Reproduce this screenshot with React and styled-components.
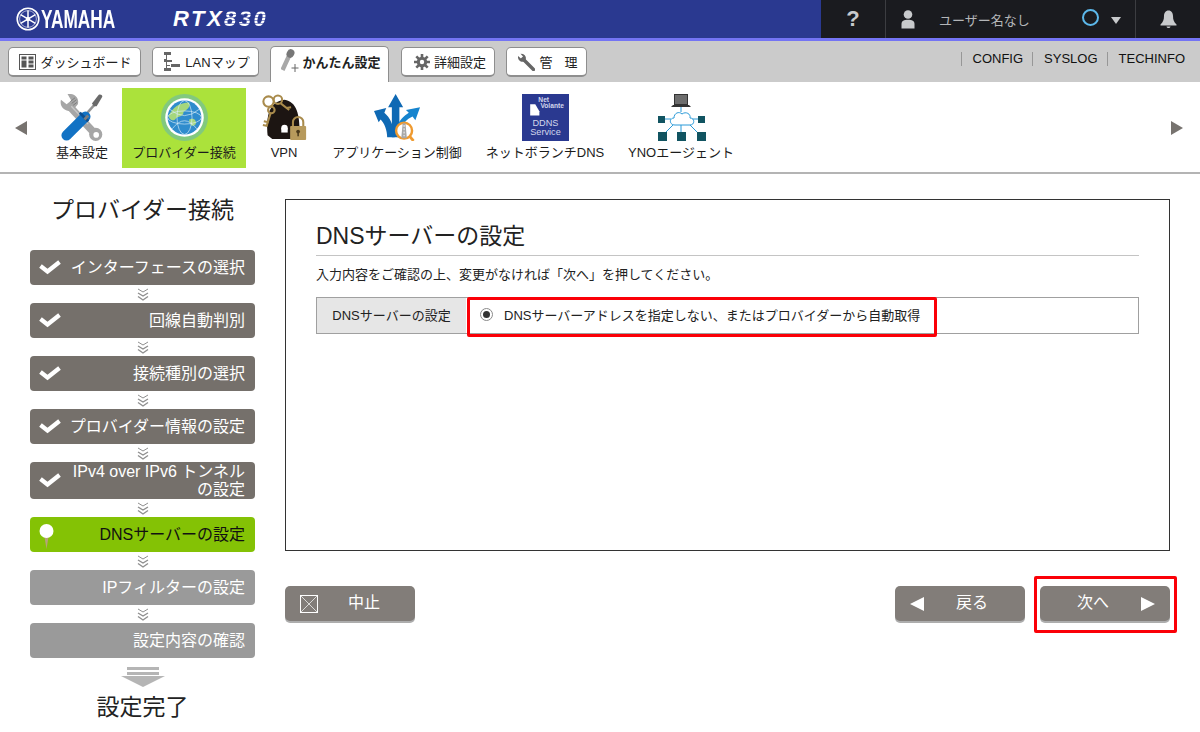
import React from "react";
import styled, { createGlobalStyle } from "styled-components";

const FONT = `"Liberation Sans", "Noto Sans CJK JP", sans-serif`;

const GlobalStyle = createGlobalStyle`
  html, body { margin: 0; padding: 0; background: #fff; }
  body { font-family: ${FONT}; color: #222; }
  * { box-sizing: border-box; }
`;

const Page = styled.div`
  width: 1200px;
  height: 732px;
  overflow: hidden;
  background: #fff;
`;

/* top bar */
const TopBar = styled.header`
  display: flex;
  height: 41px;
  border-bottom: 3px solid #7474f4;
  background: #2a3990;
`;
const Brand = styled.div`
  width: 821px;
  display: flex;
  align-items: center;
  padding-left: 16px;
  color: #fff;
`;
const YamahaText = styled.span`
  margin-left: 1px;
  width: 76px;
  font-size: 25px;
  font-weight: 700;
  transform: scaleX(0.69);
  transform-origin: left center;
  white-space: nowrap;
`;
const Model = styled.span`
  margin-left: 56px;
  font-size: 22px;
  font-weight: 700;
  font-style: italic;
  letter-spacing: 2.5px;
  white-space: nowrap;
`;
const ModelNum = styled.span`
  background: repeating-linear-gradient(180deg, #fff 0 2px, #8e96cc 2px 3px);
  -webkit-background-clip: text;
  background-clip: text;
  color: transparent;
`;
const TopTools = styled.div`
  flex: 1;
  display: flex;
  background: #1a1b1f;
`;
const ToolCell = styled.div`
  width: ${(p) => p.$w}px;
  display: flex;
  align-items: center;
  justify-content: ${(p) => p.$center ? "center" : "flex-start"};
  padding-left: ${(p) => p.$pl || 0}px;
  border-right: ${(p) => p.$edge ? "1px solid #3c3d41" : "none"};
  color: #c8cacc;
`;
const Help = styled.span`
  font-size: 22px;
  font-weight: 700;
  color: #c8cacc;
`;
const UserName = styled.span`
  margin-left: 24px;
  width: 143px;
  font-size: 13px;
  color: #b4b6b8;
  white-space: nowrap;
`;
const Ring = styled.span`
  width: 17px;
  height: 17px;
  border: 2px solid #5cb8ea;
  border-radius: 50%;
  margin: -4px 12px 0 0;
`;
const Caret = styled.span`
  width: 0;
  height: 0;
  border-left: 5px solid transparent;
  border-right: 5px solid transparent;
  border-top: 7px solid #c8cacc;
  margin-top: 2px;
`;

/* nav */
const NavBar = styled.nav`
  height: 41px;
  background: #cbcbcb;
  display: flex;
  align-items: flex-start;
  padding: 6px 15px 0 8px;
`;
const NavButton = styled.a`
  width: ${(p) => p.$w}px;
  height: 30px;
  margin-right: ${(p) => p.$mr || 11}px;
  padding-left: ${(p) => p.$pl || 2}px;
  display: flex;
  align-items: center;
  justify-content: center;
  gap: 4px;
  background: #fff;
  border: 1px solid #8e8e8e;
  border-bottom-width: 2px;
  border-radius: 5px;
  font-size: 13px;
  color: #222;
  white-space: nowrap;
`;
const NavTab = styled(NavButton)`
  height: 36px;
  margin-top: -1px;
  border-bottom: none;
  border-radius: 5px 5px 0 0;
  font-weight: 700;
  gap: 1px;
  padding-bottom: 7px;
`;
const SpacedLabel = styled.span`
  letter-spacing: 12px;
  margin-right: -12px;
`;
const NavLinks = styled.div`
  margin-left: auto;
  display: flex;
  margin-top: 5px;
`;
const NavLink = styled.a`
  height: 14px;
  padding: 0 9px 0 11px;
  border-left: 1px solid #979797;
  font-size: 13px;
  line-height: 14px;
  color: #111;
  &:last-child { padding-right: 0; }
`;

/* icon menu */
const IconMenu = styled.div`
  height: 92px;
  border-bottom: 2px solid #b4b4b4;
  display: flex;
  padding-top: 6px;
`;
const MenuArrow = styled.div`
  flex: none;
  width: ${(p) => p.$right ? 29 : 42}px;
  height: 80px;
  display: flex;
  align-items: center;
  padding-left: ${(p) => p.$right ? 0 : 15}px;
  &::before {
    content: "";
    border-top: 7px solid transparent;
    border-bottom: 7px solid transparent;
    border-right: ${(p) => p.$right ? "none" : "12px solid #77736f"};
    border-left: ${(p) => p.$right ? "12px solid #77736f" : "none"};
  }
`;
const MenuItems = styled.div`
  flex: none;
  width: 1129px;
  display: flex;
`;
const MenuItem = styled.div`
  width: ${(p) => p.$w}px;
  height: 80px;
  display: flex;
  flex-direction: column;
  align-items: center;
  padding-top: 6px;
  background: ${(p) => p.$active ? "#abe23b" : "transparent"};
  font-size: 13px;
  line-height: 17px;
  color: #1c1c1c;
  white-space: nowrap;
`;
const MenuIcon = styled.div`
  height: 47px;
  margin-bottom: 3px;
  display: flex;
  justify-content: center;
  svg { height: 47px; width: auto; }
`;

/* body */
const Main = styled.main`
  display: flex;
  padding: 0 30px;
`;
const Side = styled.aside`
  width: 225px;
  margin-right: 30px;
  display: flex;
  flex-direction: column;
  align-items: center;
`;
const SideTitle = styled.h2`
  margin: 20px 0 24px;
  height: 32px;
  font-size: 23px;
  font-weight: 400;
  line-height: 32px;
  color: #222;
  white-space: nowrap;
`;
const STEP = { done: ["#75706b", "#fff"], now: ["#84c205", "#111"], todo: ["#9a9a9a", "#fff"] };
const Step = styled.div`
  position: relative;
  width: 100%;
  height: ${(p) => p.$h || 35}px;
  display: flex;
  align-items: center;
  justify-content: flex-end;
  padding: 0 10px 0 36px;
  background: ${(p) => STEP[p.$state][0]};
  border-radius: 4px;
  color: ${(p) => STEP[p.$state][1]};
  font-size: 16px;
  line-height: 18px;
  text-align: right;
  white-space: ${(p) => p.$h ? "normal" : "nowrap"};
`;
const StepMark = styled.span`
  position: absolute;
  left: 9px;
  top: ${(p) => p.$top}px;
  display: flex;
`;
const StepGap = styled.div`
  height: 18px;
  display: flex;
  align-items: center;
  justify-content: center;
`;
const DoneArrow = styled.div`
  margin-top: 9px;
  display: flex;
`;
const DoneText = styled.div`
  margin-top: 4px;
  font-size: 23px;
  line-height: 32px;
  color: #222;
  white-space: nowrap;
`;

const Content = styled.section`
  flex: 1;
  padding-top: 25px;
`;
const Panel = styled.div`
  height: 352px;
  border: 1px solid #333;
  padding: 17px 30px 0;
`;
const PanelTitle = styled.h1`
  margin: 0;
  height: 39px;
  font-size: 23px;
  font-weight: 400;
  line-height: 39px;
  color: #222;
  border-bottom: 1px solid #c4c4c4;
`;
const Desc = styled.p`
  margin: 10px 0 14px;
  font-size: 13px;
  line-height: 17px;
  color: #222;
`;
const FormRow = styled.div`
  position: relative;
  display: flex;
  height: 37px;
  border: 1px solid #a0a0a0;
`;
const FormLabel = styled.div`
  width: 149px;
  display: flex;
  align-items: center;
  justify-content: center;
  padding-bottom: 2px;
  background: #e6e6e6;
  font-size: 13px;
  color: #222;
`;
const FormValue = styled.div`
  flex: 1;
  display: flex;
  align-items: center;
  padding: 0 0 2px 14px;
  font-size: 13px;
  color: #222;
  gap: 11px;
`;
const Radio = styled.span`
  width: 13px;
  height: 13px;
  border-radius: 50%;
  border: 1px solid #8a8a8a;
  display: flex;
  align-items: center;
  justify-content: center;
  &::after {
    content: "";
    width: 7px;
    height: 7px;
    border-radius: 50%;
    background: #333;
  }
`;
const Highlight = styled.div`
  position: absolute;
  left: ${(p) => p.$l}px;
  top: ${(p) => p.$t}px;
  width: ${(p) => p.$w}px;
  height: ${(p) => p.$h}px;
  border: 3px solid #fb0007;
  border-radius: 2px;
  pointer-events: none;
`;
const Actions = styled.div`
  display: flex;
  align-items: flex-start;
  margin-top: 35px;
`;
const ActionBtn = styled.div`
  position: relative;
  width: 130px;
  height: 35px;
  margin-left: ${(p) => p.$ml || 0}px;
  padding-bottom: 5px;
  display: flex;
  align-items: center;
  justify-content: center;
  background: #827d79;
  border-radius: 5px;
  box-shadow: 0 2px 0 #adadad;
  color: #fff;
  font-size: 16px;
`;
const BtnIcon = styled.span`
  position: absolute;
  top: 50%;
  transform: translateY(-50%);
  display: flex;
  ${(p) => p.$right ? `right: ${p.$right}px;` : `left: ${p.$left}px;`}
`;
const BtnLabel = styled.span`
  margin-left: ${(p) => p.$ml || 0}px;
`;

/* drawings */
const Check = () => (
  <svg width="22" height="16" viewBox="0 0 22 16">
    <path d="M1.5 7 L8.5 12.5 L20.5 3" fill="none" stroke="#fff" strokeWidth="4.2" />
  </svg>
);
const Chevrons = () => (
  <svg width="12" height="13" viewBox="0 0 12 13" fill="none" stroke="#8f8f8f" strokeWidth="1">
    <path d="M1 1 L6 4 L11 1" />
    <path d="M1 5 L6 8 L11 5" strokeWidth="1.4" />
    <path d="M1 8.5 L6 12 L11 8.5" strokeWidth="1.4" />
  </svg>
);
const Pin = () => (
  <svg width="15" height="26" viewBox="0 0 15 26">
    <path d="M5 10 L7.5 25 L10 10 Z" fill="#b7a27c" />
    <circle cx="7.5" cy="7" r="7" fill="#fff" />
  </svg>
);
const YamahaMark = () => (
  <svg width="24" height="24" viewBox="0 0 24 24" fill="none" stroke="#fff">
    <circle cx="12" cy="12" r="10.8" strokeWidth="1.6" />
    <circle cx="12" cy="12" r="8.4" strokeWidth="0.6" />
    <g strokeWidth="1.5">
      <path d="M12 3.5 V20.5" />
      <path d="M4.6 7.7 L19.4 16.3" />
      <path d="M4.6 16.3 L19.4 7.7" />
    </g>
    <circle cx="12" cy="12" r="2.2" fill="#fff" stroke="none" />
  </svg>
);
const UserIcon = () => (
  <svg width="14" height="19" viewBox="0 0 14 19" fill="#c8cacc">
    <circle cx="7" cy="4.5" r="4.3" />
    <path d="M0.5 18.5 L0.5 14 C0.5 11 3 9.8 7 9.8 C11 9.8 13.5 11 13.5 14 L13.5 18.5 Z" />
  </svg>
);
const BellIcon = () => (
  <svg width="17" height="19" viewBox="0 0 17 19" fill="#c8cacc">
    <path d="M8.5 0.5 C5.5 0.5 4 3 4 6 C4 10 3 12 0.5 14.5 L0.5 15.5 L16.5 15.5 L16.5 14.5 C14 12 13 10 13 6 C13 3 11.5 0.5 8.5 0.5 Z" />
    <path d="M6.5 16.5 C7 18.5 10 18.5 10.5 16.5 Z" />
  </svg>
);
const DashIcon = () => (
  <svg width="17" height="16" viewBox="0 0 17 16">
    <rect x="0.5" y="0.5" width="16" height="15" fill="#fff" stroke="#555" />
    <g fill="#555">
      <rect x="2.5" y="2.5" width="5" height="3" />
      <rect x="9.5" y="2.5" width="5" height="3" />
      <rect x="2.5" y="6.5" width="5" height="7" />
      <rect x="9.5" y="6.5" width="5" height="3" />
      <rect x="9.5" y="10.5" width="5" height="3" />
    </g>
  </svg>
);
const LanIcon = () => (
  <svg width="18" height="19" viewBox="0 0 18 19" fill="#666">
    <rect x="1" y="0" width="7" height="3" />
    <rect x="3" y="3" width="1" height="14" />
    <rect x="4" y="8" width="5" height="2" />
    <rect x="1" y="7" width="2" height="3" />
    <rect x="4" y="13" width="3" height="1" />
    <rect x="8" y="12" width="9" height="3" />
    <rect x="1" y="16" width="7" height="3" />
  </svg>
);
const WandIcon = () => (
  <svg width="20" height="24" viewBox="0 0 20 24">
    <path d="M1.5 21 L8 7" stroke="#a8a8a8" strokeWidth="4.4" />
    <ellipse cx="9.5" cy="4.5" rx="3.8" ry="4.4" transform="rotate(25 9.5 4.5)" fill="#777" />
    <path d="M14 15 V23 M10.5 19 H17.5" stroke="#666" strokeWidth="1" />
  </svg>
);
const GearIcon = () => (
  <svg width="16" height="16" viewBox="0 0 16 16">
    <g stroke="#666" strokeWidth="2.6">
      <path d="M8 0 V16 M0 8 H16 M2.3 2.3 L13.7 13.7 M13.7 2.3 L2.3 13.7" />
    </g>
    <circle cx="8" cy="8" r="5.2" fill="#666" />
    <circle cx="8" cy="8" r="2.2" fill="#fff" />
  </svg>
);
const SpannerIcon = () => (
  <svg width="18" height="18" viewBox="0 0 18 18">
    <path d="M16.5 16.5 L6 6" stroke="#666" strokeWidth="3.4" strokeLinecap="round" />
    <path d="M1 5 A4.5 4.5 0 0 0 8 8 A4.5 4.5 0 0 0 6 1 L3.5 0.8 L6 3.5 L4 5.5 L1 3 Z" fill="#666" />
  </svg>
);
const ToolsIcon = () => (
  <svg width="46" height="50" viewBox="0 0 46 50">
    <path d="M9 12 L37 42" stroke="#a6a6a6" strokeWidth="8" />
    <path d="M1 6 L7 11 L12 7 L8 0 C14 -1 21 3 19 11 L13 18 C6 19 -1 14 1 6 Z" fill="#a6a6a6" />
    <path d="M12 13 L30 32" stroke="#c9c9c9" strokeWidth="1.4" />
    <g stroke="#6f6f6f" strokeWidth="0.8">
      <path d="M11 8 L16 4 M12.5 10 L17.5 6 M14 12 L18 9" />
    </g>
    <circle cx="38" cy="43" r="7" fill="#a6a6a6" />
    <circle cx="38.5" cy="43.5" r="3" fill="#fff" />
    <path d="M37 11 L23 27" stroke="#949494" strokeWidth="2.6" />
    <path d="M34 10 L41 1 C43 0 45 1 45 3 L39 13 L36 13 Z" fill="#6a6a6a" />
    <path d="M27 24 L7 44" stroke="#1272c4" strokeWidth="11" strokeLinecap="round" />
    <path d="M21 20 L30 29" stroke="#0d4f90" strokeWidth="3" />
    <path d="M26 27 L30 23" stroke="#7d7d7d" strokeWidth="3" />
  </svg>
);
const GlobeIcon = () => (
  <svg width="50" height="50" viewBox="0 0 50 50">
    <circle cx="25" cy="25" r="25" fill="#82c97e" />
    <circle cx="25" cy="25" r="20.5" fill="#fff" />
    <circle cx="25" cy="25" r="18" fill="#2f8ccd" />
    <path d="M8 24 C12 14 20 9 30 9 C32 14 27 17 24 19 C24 25 18 23 15 27 C12 29 10 28 8 24 Z" fill="#a5d77c" />
    <path d="M30 27 C34 25 38 27 37 32 C34 36 30 33 30 27 Z" fill="#a5d77c" />
    <g fill="none" stroke="#d7ecf7" strokeWidth="0.7">
      <ellipse cx="25" cy="25" rx="8" ry="18" />
      <ellipse cx="25" cy="25" rx="18" ry="7" />
      <path d="M9 16 Q25 30 41 16 M12 37 Q25 20 38 37" />
    </g>
  </svg>
);
const VpnIcon = () => (
  <svg width="48" height="50" viewBox="0 0 48 50">
    <path d="M7 44 C5 22 9 8 25 6 C38 8 41 22 41 40 L34 48 L12 48 Z" fill="#1c1512" />
    <circle cx="25" cy="36" r="3.4" fill="#fff" />
    <rect x="21.6" y="36" width="6.8" height="5" fill="#fff" />
    <g fill="none" stroke="#a98b4c" strokeWidth="2.2">
      <circle cx="8" cy="8" r="5.5" />
      <circle cx="18" cy="6" r="4.5" />
      <circle cx="11" cy="17" r="3.5" />
      <path d="M10 21 L6 34 M21 10 L30 17" />
    </g>
    <path d="M27 15 L32 14 M3 29 L8 30 M2 33 L7 34" stroke="#a98b4c" strokeWidth="2.2" />
    <path d="M34 34 V30 A5.5 5.5 0 0 1 45 30 V34" fill="none" stroke="#a98b4c" strokeWidth="2.2" />
    <rect x="31" y="34" width="17" height="15" rx="1" fill="#b79a5c" />
    <circle cx="39.5" cy="40" r="2" fill="#4a3a1c" />
    <rect x="38.7" y="40" width="1.6" height="5" fill="#4a3a1c" />
  </svg>
);
const AppIcon = () => (
  <svg width="50" height="50" viewBox="0 0 50 50">
    <path d="M23 0 L31 14 L27 14 L27 46 L19 46 L19 14 L15 14 Z" fill="#0f69b4" />
    <path d="M0 18 L13 15 L11 20 C17 25 21 33 22 46 L14 46 C14 38 11 31 7 27 L5 30 Z" fill="#0f69b4" />
    <path d="M49 14 L44 28 L41 24 C34 27 30 33 27 40 L25 34 C27 28 32 23 37 20 L34 17 Z" fill="#1684ce" />
    <circle cx="32" cy="39" r="8.5" fill="#fff" stroke="#ef9a2f" strokeWidth="2.6" />
    <path d="M38 45 L42 50" stroke="#ef9a2f" strokeWidth="3" />
    <path d="M29 47 L30.5 31 L33.5 31 L35 47 Z" fill="#a7a7a7" />
    <path d="M32 33 V45" stroke="#fff" strokeWidth="1" strokeDasharray="2 1.5" />
  </svg>
);
const DdnsText = styled.text`
  font-family: ${FONT};
  fill: #d3d7ec;
`;
const DdnsIcon = () => (
  <svg width="46" height="46" viewBox="0 0 46 46">
    <rect width="46" height="46" fill="#2a3990" />
    <path d="M8 10 L8 21 L17 21 L17 17 L13 10 Z" fill="#fff" />
    <DdnsText x="16" y="8" fontSize="6.5" fontWeight="700">Net</DdnsText>
    <DdnsText x="18" y="14" fontSize="6.5" fontWeight="700">Volante</DdnsText>
    <DdnsText x="23" y="31" fontSize="9" textAnchor="middle">DDNS</DdnsText>
    <DdnsText x="23" y="40" fontSize="9" textAnchor="middle">Service</DdnsText>
  </svg>
);
const YnoIcon = () => (
  <svg width="50" height="47" viewBox="0 0 50 47">
    <g stroke="#2a9ad8" strokeWidth="1" fill="none">
      <path d="M25 12 V18 M9 25 H15 M42 25 H36 M9 39 L18 30 M42 39 L33 30 M25 31 V38" />
    </g>
    <rect x="18.5" y="0.5" width="13" height="10" fill="#6d6d6d" stroke="#333" />
    <path d="M17 11 H33 L35 13 H15 Z" fill="#333" />
    <path d="M19 31 C13 31 13 24 18 24 C18 19 23 17 26 20 C30 17 35 20 34 24 C39 24 39 31 34 31 Z" fill="#fff" stroke="#2a9ad8" />
    <g fill="#115461">
      <rect x="2" y="22" width="7" height="7" />
      <rect x="42" y="22" width="7" height="7" />
      <rect x="2" y="38" width="9" height="9" />
      <rect x="21" y="38" width="9" height="9" />
      <rect x="41" y="38" width="9" height="9" />
    </g>
  </svg>
);
const CrossBox = () => (
  <svg width="18" height="18" viewBox="0 0 18 18" fill="none" stroke="#fff">
    <rect x="0.5" y="0.5" width="17" height="17" />
    <path d="M1 1 L17 17 M17 1 L1 17" strokeWidth="0.7" />
  </svg>
);
const TriLeft = () => (
  <svg width="14" height="14" viewBox="0 0 14 14"><path d="M0 7 L14 0 V14 Z" fill="#fff" /></svg>
);
const TriRight = () => (
  <svg width="14" height="14" viewBox="0 0 14 14"><path d="M14 7 L0 0 V14 Z" fill="#fff" /></svg>
);
const DownArrow = () => (
  <svg width="44" height="20" viewBox="0 0 44 20" fill="#b5b5b5">
    <rect x="6" y="0" width="32" height="3" />
    <rect x="6" y="5" width="32" height="3" />
    <path d="M0 9 H44 L22 20 Z" />
  </svg>
);

const menu = [
  { label: "基本設定", w: 80, icon: <ToolsIcon /> },
  { label: "プロバイダー接続", w: 124, icon: <GlobeIcon />, active: true },
  { label: "VPN", w: 76, icon: <VpnIcon /> },
  { label: "アプリケーション制御", w: 150, icon: <AppIcon /> },
  { label: "ネットボランチDNS", w: 146, icon: <DdnsIcon /> },
  { label: "YNOエージェント", w: 126, icon: <YnoIcon /> },
];

const steps = [
  { label: "インターフェースの選択", state: "done" },
  { label: "回線自動判別", state: "done" },
  { label: "接続種別の選択", state: "done" },
  { label: "プロバイダー情報の設定", state: "done" },
  { label: "IPv4 over IPv6 トンネルの設定", state: "done", h: 37 },
  { label: "DNSサーバーの設定", state: "now" },
  { label: "IPフィルターの設定", state: "todo" },
  { label: "設定内容の確認", state: "todo" },
];

export default function App() {
  return (
    <Page>
      <GlobalStyle />
      <TopBar>
        <Brand>
          <YamahaMark />
          <YamahaText>YAMAHA</YamahaText>
          <Model>RTX<ModelNum>830</ModelNum></Model>
        </Brand>
        <TopTools>
          <ToolCell $w={65} $center $edge><Help>?</Help></ToolCell>
          <ToolCell $w={250} $pl={15} $edge>
            <UserIcon />
            <UserName>ユーザー名なし</UserName>
            <Ring />
            <Caret />
          </ToolCell>
          <ToolCell $w={64} $center><BellIcon /></ToolCell>
        </TopTools>
      </TopBar>

      <NavBar>
        <NavButton $w={133}><DashIcon />ダッシュボード</NavButton>
        <NavButton $w={107}><LanIcon />LANマップ</NavButton>
        <NavTab $w={119} $mr={12} $pl={3}><WandIcon />かんたん設定</NavTab>
        <NavButton $w={94} $pl={4}><GearIcon />詳細設定</NavButton>
        <NavButton $w={81}><SpannerIcon /><SpacedLabel>管理</SpacedLabel></NavButton>
        <NavLinks>
          <NavLink>CONFIG</NavLink>
          <NavLink>SYSLOG</NavLink>
          <NavLink>TECHINFO</NavLink>
        </NavLinks>
      </NavBar>

      <IconMenu>
        <MenuArrow />
        <MenuItems>
          {menu.map((m) => (
            <MenuItem key={m.label} $w={m.w} $active={m.active}>
              <MenuIcon>{m.icon}</MenuIcon>
              {m.label}
            </MenuItem>
          ))}
        </MenuItems>
        <MenuArrow $right />
      </IconMenu>

      <Main>
        <Side>
          <SideTitle>プロバイダー接続</SideTitle>
          {steps.map((s, i) => (
            <React.Fragment key={s.label}>
              <Step $state={s.state} $h={s.h}>
                {s.state === "done" && <StepMark $top={s.h ? 10 : 9}><Check /></StepMark>}
                {s.state === "now" && <StepMark $top={7}><Pin /></StepMark>}
                <span>{s.label}</span>
              </Step>
              {i < steps.length - 1 && <StepGap><Chevrons /></StepGap>}
            </React.Fragment>
          ))}
          <DoneArrow><DownArrow /></DoneArrow>
          <DoneText>設定完了</DoneText>
        </Side>

        <Content>
          <Panel>
            <PanelTitle>DNSサーバーの設定</PanelTitle>
            <Desc>入力内容をご確認の上、変更がなければ「次へ」を押してください。</Desc>
            <FormRow>
              <FormLabel>DNSサーバーの設定</FormLabel>
              <FormValue>
                <Radio />
                DNSサーバーアドレスを指定しない、またはプロバイダーから自動取得
              </FormValue>
              <Highlight $l={150} $t={-1} $w={470} $h={40} />
            </FormRow>
          </Panel>
          <Actions>
            <ActionBtn>
              <BtnIcon $left={15}><CrossBox /></BtnIcon>
              <BtnLabel $ml={28}>中止</BtnLabel>
            </ActionBtn>
            <ActionBtn $ml={480}>
              <BtnIcon $left={15}><TriLeft /></BtnIcon>
              <BtnLabel $ml={24}>戻る</BtnLabel>
            </ActionBtn>
            <ActionBtn $ml={15}>
              <BtnLabel $ml={-24}>次へ</BtnLabel>
              <BtnIcon $right={15}><TriRight /></BtnIcon>
              <Highlight $l={-6} $t={-10} $w={143} $h={57} />
            </ActionBtn>
          </Actions>
        </Content>
      </Main>
    </Page>
  );
}
